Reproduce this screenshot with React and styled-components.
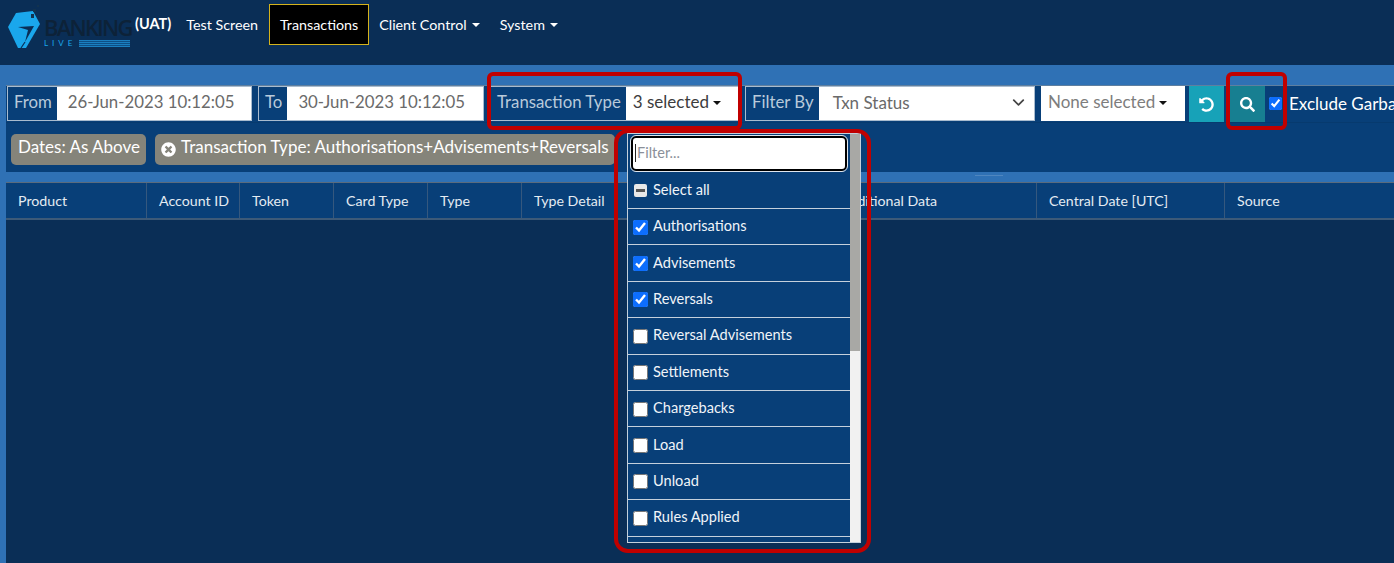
import React from 'react';
import styled, {createGlobalStyle} from 'styled-components';
import {ChevronDown} from 'lucide-react';
import {FaUndoAlt, FaSearch, FaTimesCircle} from 'react-icons/fa';

const FONT = '"Lato", "Open Sans", sans-serif';

const COLUMNS = [
  {title: 'Product', width: 141},
  {title: 'Account ID', width: 93},
  {title: 'Token', width: 94},
  {title: 'Card Type', width: 94},
  {title: 'Type', width: 94},
  {title: 'Type Detail', width: 306},
  {title: 'Additional Data', width: 209},
  {title: 'Central Date [UTC]', width: 188},
  {title: 'Source', width: 175},
];

const OPTIONS = [
  {label: 'Authorisations', checked: true},
  {label: 'Advisements', checked: true},
  {label: 'Reversals', checked: true},
  {label: 'Reversal Advisements'},
  {label: 'Settlements'},
  {label: 'Chargebacks'},
  {label: 'Load'},
  {label: 'Unload'},
  {label: 'Rules Applied'},
];

const GlobalStyle = createGlobalStyle`
  html, body {
    margin: 0;
    padding: 0;
    height: 100%;
    overflow: hidden;
    background: #0a2e56;
    font-family: ${FONT};
  }
  * {
    box-sizing: border-box;
  }
`;

function Logo() {
  return (
    <LogoWrap>
      <svg width="36" height="50" viewBox="6 0 36 50">
        <path d="M16 13 L33 11 L40 24 L26 48 L18 48 L8 27 Z" fill="#1aa7ec" />
        <path d="M18 27 L34 26 L25 42 L28 30 Z" fill="#0a2e56" />
        <path d="M25 42 L21 48" stroke="#0a2e56" strokeWidth="1.2" />
        <rect x="31" y="14" width="3" height="4" fill="#12324f" />
        <rect x="33" y="9" width="3" height="3" fill="#12324f" />
        <rect x="37" y="5" width="2" height="2" fill="#12324f" />
      </svg>
      <LogoText>
        <LogoName>BANKING</LogoName>
        <LogoLive>
          LIVE
          <LogoLines />
        </LogoLive>
      </LogoText>
    </LogoWrap>
  );
}

function Option({label, checked}) {
  return (
    <OptionRow>
      <OptionBox type="checkbox" checked={!!checked} readOnly />
      {label}
    </OptionRow>
  );
}

export default function App() {
  return (
    <Page>
      <GlobalStyle />
      <NavBar>
        <Logo />
        <EnvTag>(UAT)</EnvTag>
        <NavLink $gap={11}>Test Screen</NavLink>
        <NavLink $gap={7} $active>
          Transactions
        </NavLink>
        <NavLink $gap={6} $caret>
          Client Control
        </NavLink>
        <NavLink $gap={12} $caret>
          System
        </NavLink>
      </NavBar>

      <Main>
        <FilterPanel>
          <FilterRow>
            <Group $width={245}>
              <Addon>From</Addon>
              <Field $size={16.8}>26-Jun-2023 10:12:05</Field>
            </Group>
            <Group $width={226}>
              <Addon>To</Addon>
              <Field $size={16.8}>30-Jun-2023 10:12:05</Field>
            </Group>
            <Group $width={249}>
              <Addon>Transaction Type</Addon>
              <Field $dark $pad={7} $lift={5}>
                3 selected
                <Caret />
              </Field>
            </Group>
            <Group $width={290}>
              <Addon>Filter By</Addon>
              <Field $pad={14} $lift={2}>
                Txn Status
                <SelectArrow>
                  <ChevronDown size={19} strokeWidth={2.2} />
                </SelectArrow>
              </Field>
            </Group>
            <NoneSelected>
              None selected
              <Caret />
            </NoneSelected>
            <IconButton $color="#17a2b8">
              <FaUndoAlt size={15} />
            </IconButton>
            <IconButton $color="#177f91">
              <FaSearch size={15} />
            </IconButton>
            <ExcludeLabel>
              <ExcludeBox type="checkbox" checked readOnly />
              Exclude Garbage
            </ExcludeLabel>
          </FilterRow>
          <ChipRow>
            <Chip>Dates: As Above</Chip>
            <Chip>
              <ChipClose>
                <FaTimesCircle size={15} />
              </ChipClose>
              Transaction Type: Authorisations+Advisements+Reversals
            </Chip>
          </ChipRow>
        </FilterPanel>

        <TableHead>
          {COLUMNS.map((col) => (
            <HeadCell key={col.title} $width={col.width}>
              {col.title}
            </HeadCell>
          ))}
        </TableHead>
      </Main>

      <ResizeGrip />

      <Dropdown>
        <FilterInputWrap>
          <FilterInput>
            <TextCursor />
            Filter...
          </FilterInput>
        </FilterInputWrap>
        <SelectAllRow>
          <Indeterminate />
          Select all
        </SelectAllRow>
        {OPTIONS.map((opt) => (
          <Option key={opt.label} label={opt.label} checked={opt.checked} />
        ))}
        <ScrollTrack>
          <ScrollThumb />
        </ScrollTrack>
      </Dropdown>

      <Callout $x={487} $y={72} $w={255} $h={58} />
      <Callout $x={1226} $y={72} $w={61} $h={58} />
      <Callout $x={614} $y={129} $w={257} $h={424} $radius={14} />
    </Page>
  );
}

const Page = styled.div`
  position: relative;
  width: 1394px;
  height: 563px;
  overflow: hidden;
  background: #0a2e56;
  color: #fff;
`;

const NavBar = styled.nav`
  display: flex;
  align-items: center;
  height: 65px;
  padding: 0 0 16px 6px;
  background: #0a2e56;
`;

const LogoWrap = styled.div`
  display: flex;
  flex: none;
  align-items: flex-start;
  width: 129px;
  height: 50px;
`;

const LogoText = styled.div`
  display: flex;
  flex-direction: column;
  margin-left: 2px;
  padding-top: 18px;
`;

const LogoName = styled.div`
  font-family: "Open Sans", sans-serif;
  font-size: 22px;
  font-weight: 600;
  line-height: 18px;
  letter-spacing: -1.8px;
  color: #0d2238;
`;

const LogoLive = styled.div`
  display: flex;
  align-items: center;
  margin-top: 3px;
  font-size: 8px;
  line-height: 9px;
  letter-spacing: 4px;
  color: #1aa7ec;
`;

const LogoLines = styled.div`
  width: 51px;
  height: 7px;
  margin-left: 3px;
  background: repeating-linear-gradient(
    to bottom,
    #1a7fc0 0,
    #1a7fc0 1px,
    #0e4f86 1px,
    #0e4f86 2px
  );
`;

const EnvTag = styled.span`
  flex: none;
  margin-bottom: 2px;
  font-size: 14.5px;
  font-weight: 700;
`;

const NavLink = styled.a`
  display: flex;
  flex: none;
  align-items: center;
  height: ${(p) => (p.$active ? '41px' : 'auto')};
  margin-left: ${(p) => p.$gap}px;
  padding: 0 ${(p) => (p.$active ? '10px' : '4px')};
  font-size: 14.3px;
  color: #fff;
  background: ${(p) => (p.$active ? '#000' : 'transparent')};
  border: ${(p) => (p.$active ? '1px solid #d4b21c' : 'none')};
  &::after {
    content: '';
    display: ${(p) => (p.$caret ? 'block' : 'none')};
    margin-left: 5px;
    border-top: 4px solid #fff;
    border-left: 4px solid transparent;
    border-right: 4px solid transparent;
  }
`;

const Main = styled.main`
  position: relative;
  height: 498px;
  padding: 20px 0 0 6px;
  background: linear-gradient(to bottom, #2f71b5 0, #2f71b5 155px, #0a2e56 155px);
  box-shadow: inset 6px 0 0 #2f71b5;
`;

const FilterPanel = styled.section`
  height: 87px;
  background: #083f78;
  border-top: 1px solid #5f7f9f;
`;

const FilterRow = styled.div`
  display: flex;
  align-items: flex-start;
  gap: 6px;
  height: 37px;
  padding-left: 1px;
  white-space: nowrap;
  overflow: hidden;
  border-bottom: 1px solid #073a6e;
`;

const Group = styled.div`
  display: flex;
  flex: none;
  width: ${(p) => p.$width}px;
  height: 35px;
  border: 1px solid #a9bccf;
  background: #fff;
`;

const Addon = styled.div`
  display: flex;
  align-items: center;
  padding: 0 5px 4px 6px;
  font-size: 16.8px;
  color: #b9cadb;
  background: #083f78;
`;

const Field = styled.div`
  display: flex;
  flex: 1;
  align-items: center;
  padding-left: ${(p) => p.$pad || 11}px;
  padding-bottom: ${(p) => p.$lift ?? 4}px;
  font-size: ${(p) => p.$size || 17}px;
  color: ${(p) => (p.$dark ? '#3c3c3c' : '#6a6a6a')};
  background: #fff;
`;

const Caret = styled.span`
  display: inline-block;
  margin-left: 4px;
  margin-top: 4px;
  border-top: 4px solid #111;
  border-left: 4px solid transparent;
  border-right: 4px solid transparent;
`;

const SelectArrow = styled.span`
  display: flex;
  margin-left: auto;
  margin-right: 6px;
  color: #444;
`;

const NoneSelected = styled.div`
  display: flex;
  flex: none;
  align-items: center;
  width: 144px;
  height: 35px;
  padding: 0 0 5px 7px;
  font-size: 17px;
  color: #7d7d7d;
  background: #fff;
`;

const IconButton = styled.button`
  display: flex;
  flex: none;
  align-items: center;
  justify-content: center;
  width: 35px;
  height: 36px;
  margin-left: -2px;
  padding: 0;
  border: none;
  color: #fff;
  background: ${(p) => p.$color};
  & + & {
    margin-left: 0;
  }
`;

const ExcludeLabel = styled.label`
  display: flex;
  flex: none;
  align-items: center;
  height: 35px;
  margin-left: -2px;
  font-size: 17px;
  color: #fff;
`;

const ExcludeBox = styled.input`
  width: 13px;
  height: 13px;
  margin: 0 7px 0 0;
  accent-color: #0d6efd;
`;

const ChipRow = styled.div`
  display: flex;
  gap: 9px;
  margin-top: 11px;
  padding-left: 5px;
`;

const Chip = styled.div`
  display: flex;
  align-items: center;
  height: 31px;
  padding: 0 6px 6px 7px;
  border-radius: 5px;
  font-size: 17px;
  color: #fff;
  background: #85847a;
  white-space: nowrap;
`;

const ChipClose = styled.span`
  display: flex;
  margin: 5px 5px 0 -1px;
`;

const TableHead = styled.div`
  display: flex;
  height: 38px;
  margin-top: 10px;
  background: #083f78;
  border-top: 1px solid #5a6b7d;
  border-bottom: 2px solid #3d5a78;
`;

const HeadCell = styled.div`
  display: flex;
  flex: none;
  align-items: center;
  width: ${(p) => p.$width}px;
  padding-left: 12px;
  font-size: 14.2px;
  color: #e4ebf2;
  border-right: 1px solid #35587e;
  &:last-child {
    border-right: none;
  }
`;

const ResizeGrip = styled.div`
  position: absolute;
  left: 975px;
  top: 175px;
  width: 28px;
  height: 1px;
  background: #4f86bf;
`;

const Dropdown = styled.div`
  position: absolute;
  left: 627px;
  top: 133px;
  width: 234px;
  height: 410px;
  overflow: hidden;
  background: #083f78;
  border: 1px solid #c4d0dc;
`;

const FilterInputWrap = styled.div`
  display: flex;
  height: 39px;
  padding: 2px 13px 0 3px;
`;

const FilterInput = styled.div`
  display: flex;
  align-items: center;
  width: 100%;
  height: 35px;
  padding: 0 0 2px 2px;
  border: 2px solid #000;
  outline: 1px solid #dfe6ee;
  border-radius: 5px;
  font-size: 14.5px;
  color: #8a9099;
  background: #fff;
`;

const TextCursor = styled.span`
  width: 1px;
  height: 18px;
  margin-right: 1px;
  background: #222;
`;

const OptionRow = styled.label`
  display: flex;
  align-items: center;
  height: 36.4px;
  margin-right: 10px;
  padding: 0 0 2px 5px;
  font-size: 14.6px;
  color: #f0f4f8;
  border-bottom: 1px solid #c4d0dc;
`;

const SelectAllRow = styled(OptionRow)`
  height: 36px;
`;

const OptionBox = styled.input`
  width: 15px;
  height: 15px;
  margin: 3px 5px 0 0;
  accent-color: #0d6efd;
`;

const Indeterminate = styled.span`
  position: relative;
  width: 13px;
  height: 13px;
  margin: 2px 6px 0 1px;
  border-radius: 2px;
  background: #e8e8e8;
  &::after {
    content: '';
    position: absolute;
    left: 2px;
    right: 2px;
    top: 5px;
    height: 3px;
    background: #555;
  }
`;

const ScrollTrack = styled.div`
  position: absolute;
  right: 0;
  top: 0;
  bottom: 0;
  width: 10px;
  background: #f1f1f1;
`;

const ScrollThumb = styled.div`
  height: 217px;
  background: #a8a8a5;
`;

const Callout = styled.div`
  position: absolute;
  left: ${(p) => p.$x}px;
  top: ${(p) => p.$y}px;
  width: ${(p) => p.$w}px;
  height: ${(p) => p.$h}px;
  border: 4px solid #c00000;
  border-radius: ${(p) => p.$radius || 6}px;
  pointer-events: none;
`;
